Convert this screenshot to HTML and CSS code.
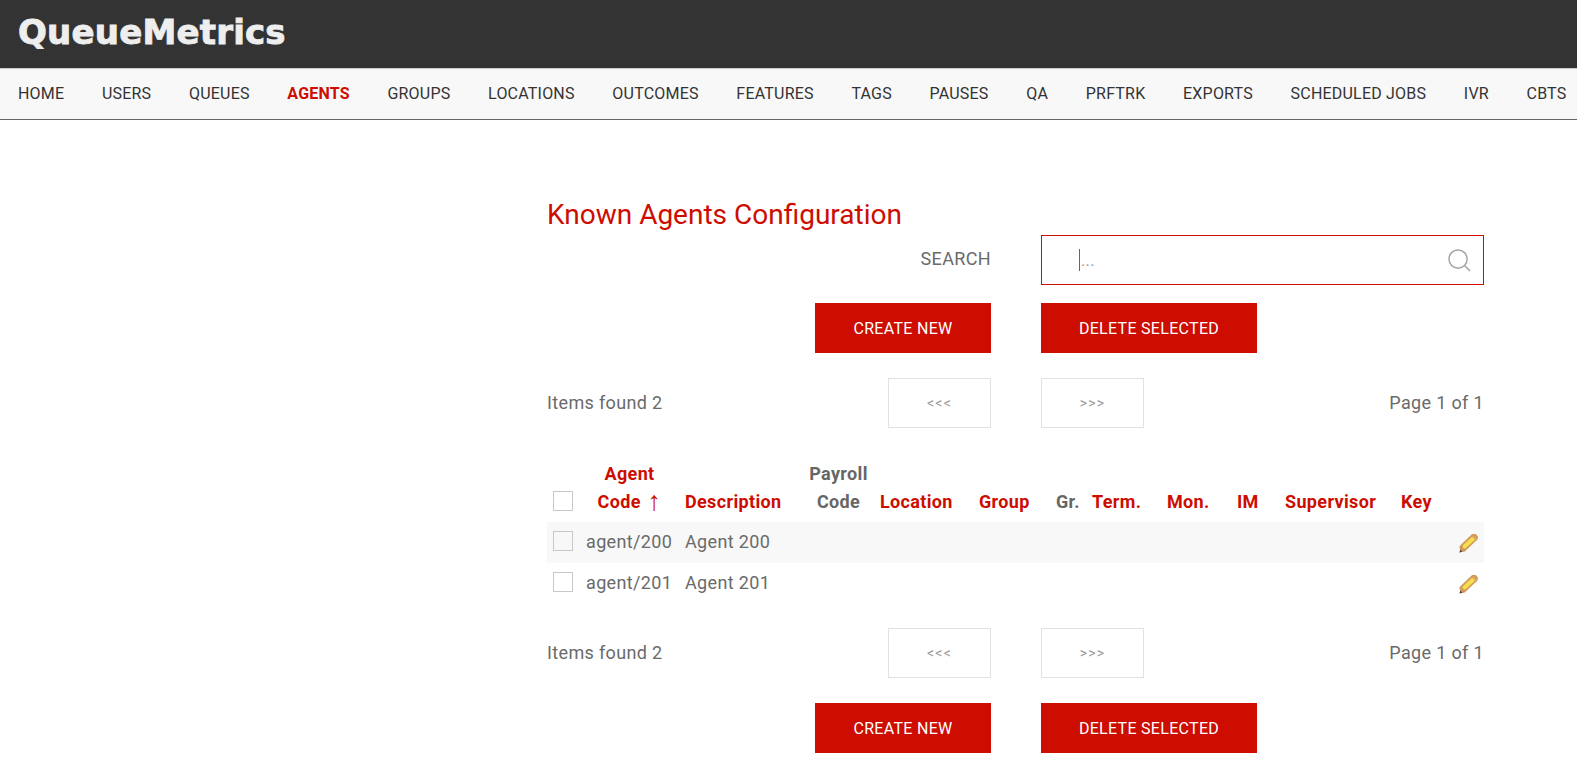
FILE: index.html
```html
<!DOCTYPE html>
<html lang="en">
<head>
    <meta charset="UTF-8">
    <title>QueueMetrics</title>
    <link rel="stylesheet" href="styles.css">
</head>
<body>
    <svg class="icon-defs" width="0" height="0">
        <symbol id="pencil" viewBox="0 0 20 19">
            <path d="M4.5 13.5 L15 3.5" stroke="#d39a5a" stroke-width="7.6" stroke-linecap="round" fill="none"/>
            <path d="M5.5 12.5 L14 4.8" stroke="#f3e04e" stroke-width="4" stroke-linecap="round" fill="none"/>
            <path d="M13.5 2 L18 6" stroke="#e0a868" stroke-width="2" fill="none"/>
            <path d="M0.5 18.5 L2 12.5 L7 17 Z" fill="#cf9a60"/>
            <path d="M0.5 18.5 L1.2 15.6 L3.6 17.8 Z" fill="#5d4a38"/>
        </symbol>
    </svg>

    <div class="top-bar">
        <span class="logo">QueueMetrics</span>
    </div>
    <div class="nav">
        <a>HOME</a>
        <a>USERS</a>
        <a>QUEUES</a>
        <a class="active">AGENTS</a>
        <a>GROUPS</a>
        <a>LOCATIONS</a>
        <a>OUTCOMES</a>
        <a>FEATURES</a>
        <a>TAGS</a>
        <a>PAUSES</a>
        <a>QA</a>
        <a>PRFTRK</a>
        <a>EXPORTS</a>
        <a>SCHEDULED JOBS</a>
        <a>IVR</a>
        <a>CBTS</a>
    </div>

    <div class="content">
        <h1 class="title">Known Agents Configuration</h1>

        <div class="form-row search-row">
            <div class="search-label">SEARCH</div>
            <div class="search-box">
                <span class="caret"></span><span class="placeholder">...</span>
                <svg class="search-icon" width="23" height="23" viewBox="0 0 24 24" fill="none" stroke="#a3a3a3" stroke-width="1.5">
                    <circle cx="10.5" cy="10.5" r="9.5"/>
                    <path d="M17.5 17.5 L23 23"/>
                </svg>
            </div>
        </div>

        <div class="form-row buttons-row">
            <div class="cell-right"><button class="btn btn-create">CREATE NEW</button></div>
            <div><button class="btn btn-delete">DELETE SELECTED</button></div>
        </div>

        <div class="form-row pager">
            <div class="cell-between"><span class="pager-text">Items found 2</span><button class="page-btn">&lt;&lt;&lt;</button></div>
            <div class="cell-between"><button class="page-btn">&gt;&gt;&gt;</button><span class="pager-text">Page 1 of 1</span></div>
        </div>

        <table class="agents">
            <colgroup>
                <col class="c-check">
                <col class="c-code">
                <col class="c-desc">
                <col class="c-payroll">
                <col class="c-location">
                <col class="c-group">
                <col class="c-gr">
                <col class="c-term">
                <col class="c-mon">
                <col class="c-im">
                <col class="c-super">
                <col class="c-key">
                <col class="c-edit">
            </colgroup>
            <thead>
                <tr>
                    <th><span class="check"></span></th>
                    <th class="center sort">Agent<br>Code <span class="arrow">↑</span></th>
                    <th class="sort">Description</th>
                    <th class="center">Payroll<br>Code</th>
                    <th class="sort">Location</th>
                    <th class="sort">Group</th>
                    <th>Gr.</th>
                    <th class="sort">Term.</th>
                    <th class="sort">Mon.</th>
                    <th class="sort">IM</th>
                    <th class="sort">Supervisor</th>
                    <th class="sort">Key</th>
                    <th></th>
                </tr>
            </thead>
            <tbody>
                <tr class="odd">
                    <td><span class="check"></span></td>
                    <td>agent/200</td>
                    <td>Agent 200</td>
                    <td></td><td></td><td></td><td></td><td></td><td></td><td></td><td></td><td></td>
                    <td class="edit"><svg width="20" height="19"><use href="#pencil"/></svg></td>
                </tr>
                <tr>
                    <td><span class="check"></span></td>
                    <td>agent/201</td>
                    <td>Agent 201</td>
                    <td></td><td></td><td></td><td></td><td></td><td></td><td></td><td></td><td></td>
                    <td class="edit"><svg width="20" height="19"><use href="#pencil"/></svg></td>
                </tr>
            </tbody>
        </table>

        <div class="form-row pager pager-bottom">
            <div class="cell-between"><span class="pager-text">Items found 2</span><button class="page-btn">&lt;&lt;&lt;</button></div>
            <div class="cell-between"><button class="page-btn">&gt;&gt;&gt;</button><span class="pager-text">Page 1 of 1</span></div>
        </div>

        <div class="form-row buttons-row buttons-bottom">
            <div class="cell-right"><button class="btn btn-create">CREATE NEW</button></div>
            <div><button class="btn btn-delete">DELETE SELECTED</button></div>
        </div>
    </div>
</body>
</html>
```

FILE: styles.css
```css
body {
    margin: 0;
    font-family: Roboto, sans-serif;
    font-size: 18px;
    letter-spacing: 0.35px;
    color: #6A6A6A;
    background-color: #FFFFFF;
}

.icon-defs {
    display: block;
    height: 0;
}

.top-bar {
    height: 68px;
    background-color: #333333;
    display: flex;
    align-items: center;
    padding-left: 18px;
}

.logo {
    font-family: "DejaVu Sans", sans-serif;
    font-weight: bold;
    font-size: 34px;
    letter-spacing: 0.2px;
    color: #EEEEEE;
    -webkit-text-stroke: 0.9px #EEEEEE;
    position: relative;
    top: -2px;
}

.nav {
    display: flex;
    gap: 37.7px;
    height: 48px;
    padding-bottom: 2px;
    align-items: center;
    padding-left: 18px;
    background-color: #F8F8F8;
    border-top: 1px solid #CCCCCC;
    border-bottom: 1px solid #666666;
    font-size: 16px;
    letter-spacing: 0.2px;
    color: #333333;
}

.nav .active {
    color: #CC0D00;
    font-weight: bold;
}

.content {
    width: 937px;
    margin-left: 547px;
}

.title {
    margin: 0;
    padding-top: 76px;
    padding-bottom: 1px;
    height: 38px;
    line-height: 38px;
    font-size: 28px;
    font-weight: normal;
    letter-spacing: 0;
    color: #CC0D00;
}

.form-row {
    display: grid;
    grid-template-columns: 444px 443px;
    column-gap: 50px;
}

.search-row {
    align-items: center;
}

.search-label {
    text-align: right;
    padding-bottom: 4px;
}

.search-box {
    height: 48px;
    border: 1px solid #CC0D00;
    display: flex;
    align-items: center;
    padding-left: 37px;
    padding-right: 12px;
}

.caret {
    width: 1px;
    height: 22px;
    background-color: #666666;
}

.placeholder {
    color: #999999;
    font-size: 16px;
    margin-left: 1px;
}

.search-icon {
    margin-left: auto;
}

.buttons-row {
    margin-top: 18px;
}

.buttons-bottom {
    margin-top: 25px;
}

.cell-right {
    display: flex;
    justify-content: flex-end;
}

.cell-between {
    display: flex;
    justify-content: space-between;
    align-items: center;
}

.btn {
    height: 50px;
    border: none;
    background-color: #CC0D00;
    color: #FFFFFF;
    font-family: Roboto, sans-serif;
    font-size: 16px;
    letter-spacing: 0.3px;
    padding: 0;
}

.btn-create {
    width: 176px;
}

.btn-delete {
    width: 216px;
}

.pager {
    margin-top: 25px;
}

.pager-bottom {
    margin-top: 24px;
}

.pager-text {
    padding-bottom: 2px;
}

.page-btn {
    width: 103px;
    height: 50px;
    border: 1px solid #E1E1E1;
    background-color: #FFFFFF;
    color: #999999;
    font-family: Roboto, sans-serif;
    font-size: 14px;
    letter-spacing: 1.2px;
    padding: 0;
}

.agents {
    width: 937px;
    margin-top: 32px;
    border-collapse: collapse;
    table-layout: fixed;
}

.c-check { width: 33px; }
.c-code { width: 99px; }
.c-desc { width: 124px; }
.c-payroll { width: 71px; }
.c-location { width: 99px; }
.c-group { width: 77px; }
.c-gr { width: 36px; }
.c-term { width: 75px; }
.c-mon { width: 70px; }
.c-im { width: 48px; }
.c-super { width: 116px; }
.c-key { width: 55px; }
.c-edit { width: 34px; }

.agents th {
    padding: 0 6px 6px 6px;
    line-height: 28px;
    text-align: left;
    vertical-align: bottom;
    font-weight: bold;
    color: #666666;
    white-space: nowrap;
}

.agents th.center {
    text-align: center;
}

.agents th.sort {
    color: #CC0D00;
}

.arrow {
    font-family: "Liberation Sans", sans-serif;
    font-weight: normal;
    font-size: 27px;
    line-height: 20px;
    margin-left: 2px;
    position: relative;
    top: 2px;
}

.agents th .check {
    margin-bottom: 5px;
}

.agents td {
    height: 39px;
    padding: 0 6px 2px 6px;
    white-space: nowrap;
}

.odd {
    background-color: #F8F8F8;
}

.check {
    display: block;
    width: 18px;
    height: 18px;
    border: 1px solid #C8C8C8;
    background-color: #FFFFFF;
}

.agents td .check {
    margin-top: -2px;
}

.odd .check {
    background-color: #F8F8F8;
}

.agents td.edit {
    padding: 2px 5px 0 0;
    text-align: right;
}

.edit svg {
    display: block;
    margin-left: auto;
}
```
